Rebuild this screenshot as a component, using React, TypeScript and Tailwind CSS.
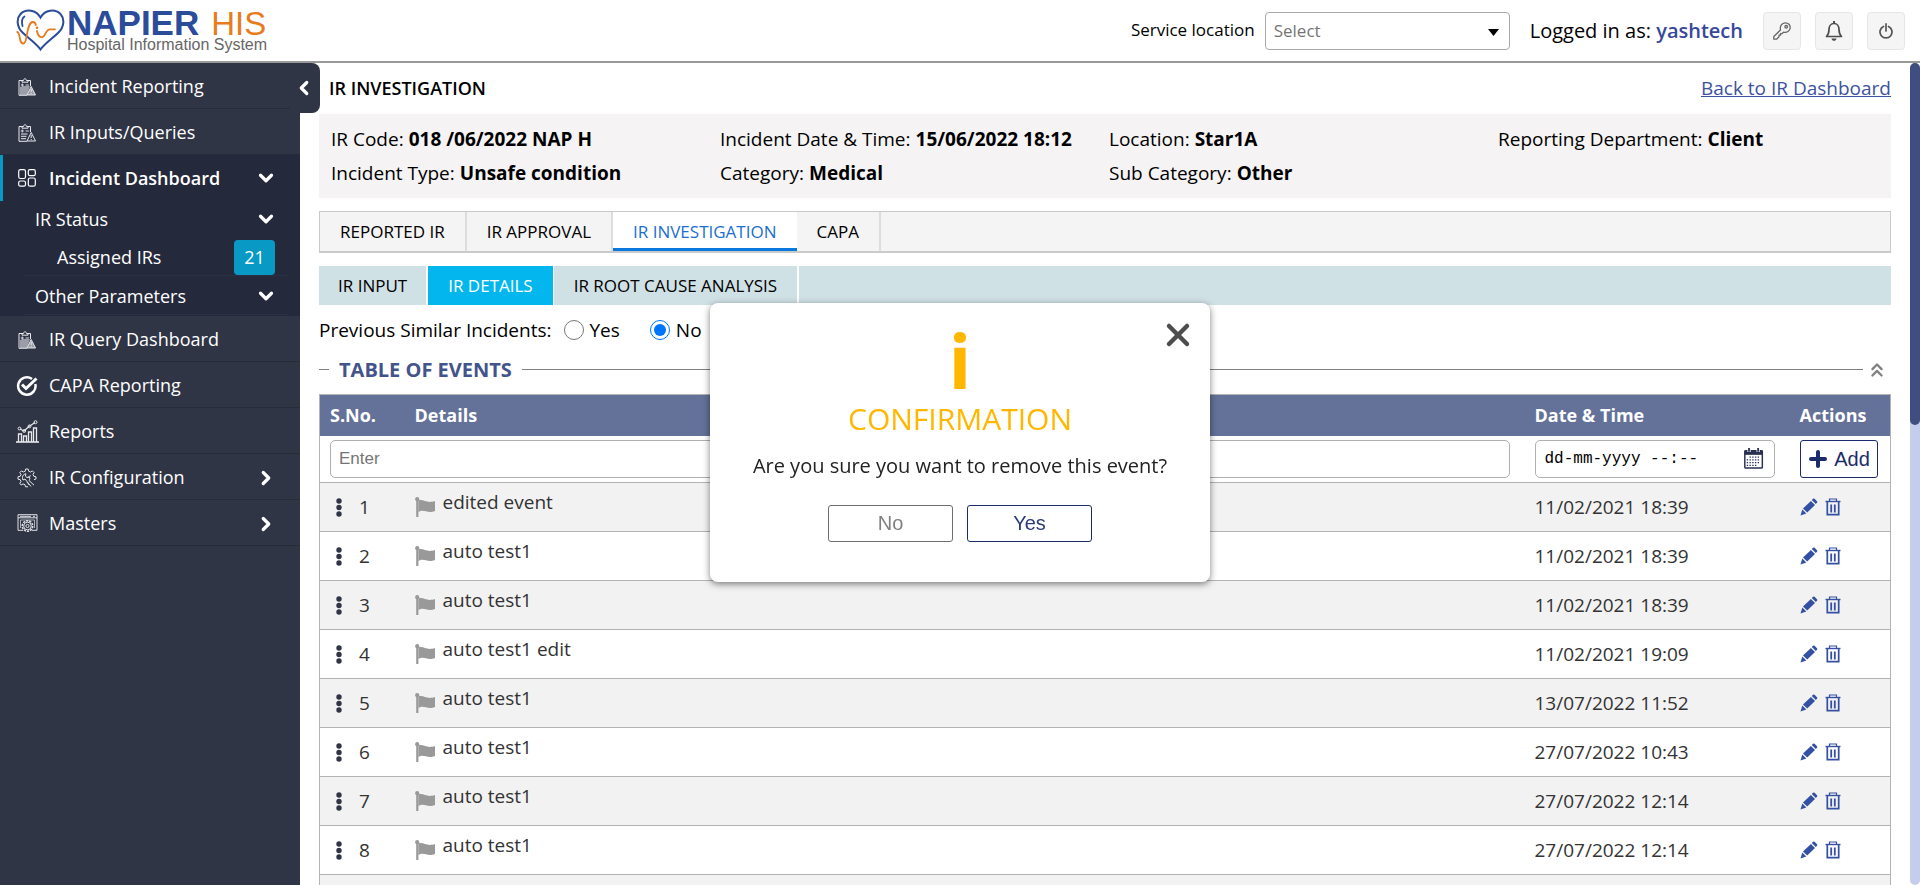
import React from "react";
import { ChevronDown, ChevronRight, ChevronLeft, ChevronsUp, X, Plus } from "lucide-react";

function HeartLogo() {
  return (
    <svg width="50" height="44" viewBox="0 0 50 44" fill="none" aria-hidden="true">
      <path d="M24.500 40.500C20 34 12 29 6.500 23.500C1 18 0 10 4.500 5C10 -0.500 20 0.500 24.500 8.500C29 0.500 39 -0.500 44.500 5C49 10 48 18 42.500 23.500C37 29 29 34 24.500 40.500Z" stroke="#2b4c9b" strokeWidth="2" />
      <path d="M6.500 17C5.500 12.500 6 9 8.500 7.500" stroke="#2b4c9b" strokeWidth="1.800" strokeLinecap="round" />
      <path d="M1.200 23C3 23 3.200 26 4 30C5 35 8 36 9.500 32C11.500 26 11.500 14 16.500 13C19 12.700 19.500 14.500 19.800 16M21 22C22 28 25.500 29.500 28 27C30.500 24 30.500 20 34 20.300H39" stroke="#e87b1c" strokeWidth="1.800" strokeLinecap="round" />
      <circle cx="21" cy="18.800" r="1.300" fill="#e87b1c" />
    </svg>
  );
}

function ClipboardIcon({ filled }: { filled?: boolean }) {
  return (
    <svg width="18" height="18" viewBox="0 0 18 18" fill="none" stroke="#e8e9ec" aria-hidden="true">
      {filled && <path d="M5 8H12L9 17H2V9Z" fill="#9b9ea8" stroke="none" />}
      <path d="M4.500 2.500H1V17.300H9M9.500 2.500H12.500V8" />
      <path d="M4 4.200V2.500H5.500C5.500 0.200 8.500 0.200 8.500 2.500H10V4.200Z" />
      <path d="M2.800 7H5.800M4.300 5.500V8.500M7.500 7H11" strokeWidth="0.900" />
      {!filled && <path d="M3 10H9.500M3 12.300H8.500M3 14.700H8" />}
      <path d="M13.200 8.500L17.500 17H9Z" fill={filled ? "#9b9ea8" : "#303546"} />
      <path d="M13.200 11V14M13.200 15V16" />
    </svg>
  );
}

function DashboardIcon() {
  return (
    <svg width="18" height="18" viewBox="0 0 18 18" fill="none" stroke="#fff" strokeWidth="1.200" aria-hidden="true">
      <rect x="0.700" y="0.700" width="6.800" height="8.800" rx="1.800" />
      <rect x="10.300" y="0.700" width="7" height="6" rx="1.600" />
      <rect x="0.700" y="12" width="6.800" height="5.200" rx="1.600" />
      <rect x="10.300" y="9" width="7" height="8.200" rx="1.800" />
    </svg>
  );
}

function CheckCircleIcon() {
  return (
    <svg width="22" height="20" viewBox="0 0 22 20" fill="none" stroke="#fff" aria-hidden="true">
      <path d="M16 3A8.700 8.700 0 1 0 19.300 8" strokeWidth="2.500" />
      <path d="M6 8.500L10 12.500L20.500 2.500" strokeWidth="3" />
    </svg>
  );
}

function ReportsIcon() {
  return (
    <svg width="23" height="23" viewBox="0 0 23 23" fill="none" stroke="#e8e9ec" aria-hidden="true">
      <path d="M0 22H23" strokeWidth="1.600" />
      <path d="M2.500 22V14H5.500V22M7.500 22V16H10.500V22M12.500 22V12H15.500V22M17.500 22V8H20.500V22" strokeWidth="1.300" />
      <path d="M4 9L8 11L13 6.500L19 2.500" strokeWidth="1.200" />
      <circle cx="3.500" cy="8.500" r="1.400" />
      <circle cx="8.200" cy="11" r="1.400" />
      <circle cx="13.500" cy="6.300" r="1.400" />
      <circle cx="19.500" cy="2.200" r="1.500" />
    </svg>
  );
}

function ToolGearIcon() {
  return (
    <svg width="20" height="20" viewBox="0 0 20 20" fill="none" stroke="#e8e9ec" strokeLinejoin="round" aria-hidden="true">
      <path d="M11 18.800H8.500L8 16.700L6 15.900L4.200 17L2.800 15.400L4 13.600L3.200 11.600L1 11.200V8.800L3.200 8.300L4 6.400L2.800 4.600L4.500 2.900L6.300 4L8.200 3.200L8.700 1H11.200L11.700 3.200L13.600 4L15.400 2.900L17.100 4.600L16 6.400L16.800 8.300L19 8.800V11L17 11.600" />
      <path d="M6 12C4.600 9 6 6 9 5.800L8.300 8L10 9.500L12.500 9C13 11 12.500 12 12 12.500L17 17.200M6 12L8 11L14 18.500" />
      <path d="M10 14L12 17M14 7.500L11 9" strokeWidth="0.800" />
    </svg>
  );
}

function MastersIcon() {
  return (
    <svg width="21" height="19" viewBox="0 0 21 19" fill="none" stroke="#e0e2e6" aria-hidden="true">
      <path d="M6 16.300H1V0.700H20V16.300H15M1 3.800H20M3 2.300H14M16 2.300H18" />
      <path d="M3.500 14V6H17.500V14" strokeWidth="0.700" />
      <circle cx="10.500" cy="12" r="5.200" strokeDasharray="2.200 1" strokeWidth="1.600" />
      <circle cx="10.500" cy="12" r="3.800" />
      <circle cx="10.500" cy="12" r="1.600" />
    </svg>
  );
}

function KeyIcon() {
  return (
    <svg width="18" height="18" viewBox="0 0 18 18" fill="none" stroke="#666" strokeWidth="1.300" strokeLinejoin="round" aria-hidden="true">
      <path d="M7.500 8C6.700 4.500 8.500 0.800 12.300 0.800C15.500 0.800 17.300 3.200 17.200 5.700C17 9 13.800 11 10.500 10.200L8.800 11.700H7.500V13.200H6V14.700L3.500 17.200H0.800V14.500Z" />
      <circle cx="13.200" cy="4.800" r="1.300" />
    </svg>
  );
}

function BellIcon() {
  return (
    <svg width="18" height="20" viewBox="0 0 18 20" fill="none" stroke="#4d4d4d" strokeWidth="1.700" strokeLinejoin="round" aria-hidden="true">
      <path d="M1.500 15.500C3.500 13.500 4 12 4 8.500C4 5 6 2.500 9 2.500C12 2.500 14 5 14 8.500C14 12 14.500 13.500 16.500 15.500Z" />
      <path d="M9 0V2.500" strokeWidth="2" />
      <path d="M6.500 17.500H11.500C11.300 19 10 19.800 9 19.800C8 19.800 6.700 19 6.500 17.500Z" fill="#4d4d4d" stroke="none" />
    </svg>
  );
}

function PowerIcon() {
  return (
    <svg width="14" height="16" viewBox="0 0 14 16" fill="none" stroke="#555" strokeWidth="1.700" strokeLinecap="round" aria-hidden="true">
      <path d="M7 0.900V8M4.500 3.500A6 6 0 1 0 9.500 3.500" />
    </svg>
  );
}

function FlagIcon() {
  return (
    <svg width="20" height="20" viewBox="0 0 20 20" fill="#999" aria-hidden="true">
      <circle cx="2.200" cy="2.200" r="2.100" />
      <path d="M1.200 2H3.400V20H1.200Z" />
      <path d="M3.400 3.500C9 1.500 11 7 20 4V14C12 17 9 11.500 3.400 15Z" />
    </svg>
  );
}

function PencilIcon() {
  return (
    <svg width="18" height="18" viewBox="0 0 18 18" fill="#3450a4" aria-hidden="true">
      <path d="M13 0.800Q13.800 0 14.600 0.800L17 3.200Q17.800 4 17 4.800L15.800 6L11.800 2Z" />
      <path d="M10.900 2.900L15 7L7.200 14.600L3 10.400Z" />
      <path d="M2.300 11.500L6.300 15.500L0.500 17.500Z" />
    </svg>
  );
}

function TrashIcon() {
  return (
    <svg width="16" height="18" viewBox="0 0 16 18" fill="none" stroke="#3450a4" aria-hidden="true">
      <path d="M0.500 3.500H15.500" strokeWidth="1.400" />
      <path d="M4.500 3V1H11.500V3" strokeWidth="1.200" />
      <path d="M2.300 4V16.700H13.700V4" strokeWidth="1.700" />
      <path d="M6.200 6.500V14.500M9.800 6.500V14.500" strokeWidth="1.800" />
    </svg>
  );
}

function CalendarIcon() {
  return (
    <svg width="21" height="23" viewBox="0 0 21 23" fill="none" aria-hidden="true">
      <rect x="0.900" y="3" width="19.200" height="19" rx="1" stroke="#2a3050" strokeWidth="1.600" />
      <rect x="0.500" y="2.500" width="20" height="5" fill="#2a3050" />
      <path d="M5.500 0V4.500M15.500 0V4.500" stroke="#fff" strokeWidth="3.500" />
      <path d="M5.500 0V4M15.500 0V4" stroke="#2a3050" strokeWidth="2" />
      <path d="M6 10H18M3 13H18M3 16H18M3 19H15" stroke="#2a3050" strokeWidth="1.500" strokeDasharray="1.500 1.500" />
    </svg>
  );
}

function DragDots() {
  return (
    <svg width="6" height="19" viewBox="0 0 6 19" fill="#303546" aria-hidden="true">
      <circle cx="3" cy="3" r="2.700" />
      <circle cx="3" cy="9.500" r="2.700" />
      <circle cx="3" cy="16" r="2.700" />
    </svg>
  );
}

function NavItem({ icon, label, chevron, active }: { icon: React.ReactNode; label: string; chevron?: "right" | "down"; active?: boolean }) {
  return (
    <a
      href="#"
      className={
        active
          ? "flex h-[46px] items-center border-l-[3px] border-[#0899c5] bg-[#25293c] pr-[23px] pl-3 font-semibold"
          : "flex h-[46px] items-center border-b border-[#272c3b] pt-[2px] pr-[23px] pl-[15px]"
      }
    >
      <span className="mr-[10px] flex w-6 shrink-0 justify-center">{icon}</span>
      <span className="flex-1">{label}</span>
      {chevron === "right" && <ChevronRight size={22} strokeWidth={3.5} />}
      {chevron === "down" && <ChevronDown size={22} strokeWidth={3.5} />}
    </a>
  );
}

function Sidebar() {
  return (
    <aside className="relative w-[300px] shrink-0 bg-[#303546] text-[18px] text-white">
      <button aria-label="Collapse menu" className="absolute top-0 left-[290px] z-10 flex h-[50px] w-[30px] items-center rounded-r-lg bg-[#303546] pl-[3px]">
        <ChevronLeft size={22} strokeWidth={3.5} />
      </button>
      <nav>
        <NavItem icon={<ClipboardIcon filled />} label="Incident Reporting" />
        <NavItem icon={<ClipboardIcon />} label="IR Inputs/Queries" />
        <NavItem icon={<DashboardIcon />} label="Incident Dashboard" chevron="down" active />
        <div className="bg-[#25293c] pb-px">
          <a href="#" className="flex h-9 items-center pr-[23px] pl-[35px]">
            <span className="flex-1">IR Status</span>
            <ChevronDown size={22} strokeWidth={3.5} />
          </a>
          <a href="#" className="mr-3 ml-6 flex h-[39px] items-center border-b border-[#2b3043] pt-[2px] pr-[13px] pl-[33px]">
            <span className="flex-1">Assigned IRs</span>
            <span className="flex h-[35px] w-[41px] items-center justify-center rounded bg-[#0899c5]">21</span>
          </a>
          <a href="#" className="mr-3 ml-6 flex h-[39px] items-center border-b border-[#2b3043] pt-[2px] pr-[11px] pl-[11px]">
            <span className="flex-1">Other Parameters</span>
            <ChevronDown size={22} strokeWidth={3.5} />
          </a>
        </div>
        <NavItem icon={<ClipboardIcon filled />} label="IR Query Dashboard" />
        <NavItem icon={<CheckCircleIcon />} label="CAPA Reporting" />
        <NavItem icon={<ReportsIcon />} label="Reports" />
        <NavItem icon={<ToolGearIcon />} label="IR Configuration" chevron="right" />
        <NavItem icon={<MastersIcon />} label="Masters" chevron="right" />
      </nav>
    </aside>
  );
}

function HeaderButton({ label, children }: { label: string; children: React.ReactNode }) {
  return (
    <button aria-label={label} className="flex h-[38px] w-[38px] items-center justify-center rounded border border-[#e6e6e6] bg-[#f5f5f5]">
      {children}
    </button>
  );
}

function Header() {
  return (
    <header className="flex h-[63px] shrink-0 items-center justify-between border-b-2 border-[#999] bg-white pr-[15px] pl-4">
      <a href="#" className="flex items-center gap-px font-['Liberation_Sans',sans-serif]">
        <HeartLogo />
        <span className="flex flex-col">
          <span className="flex items-baseline gap-3 leading-[28px]">
            <span className="text-[35px] font-bold text-[#2b4c9b]">NAPIER</span>
            <span className="text-[33px] text-[#e87b1c]">HIS</span>
          </span>
          <span className="text-[16px] leading-[14px] text-[#666]">Hospital Information System</span>
        </span>
      </a>
      <div className="flex items-center">
        <label htmlFor="location" className="mr-[10px] pb-[2px] text-[17px] font-medium">Service location</label>
        <div className="relative mr-5">
          <select id="location" className="block h-[38px] w-[245px] appearance-none rounded border border-[#aaa] bg-white px-2 text-[17px] text-[#757575]">
            <option>Select</option>
          </select>
          <svg className="pointer-events-none absolute top-[17px] right-[11px]" width="11" height="7" viewBox="0 0 11 7" aria-hidden="true">
            <path d="M0 0H11L5.500 7Z" fill="#000" />
          </svg>
        </div>
        <p className="mr-5 text-[20px]">
          Logged in as: <span className="font-semibold text-[#36489b]">yashtech</span>
        </p>
        <div className="flex gap-[14px]">
          <HeaderButton label="Change password"><KeyIcon /></HeaderButton>
          <HeaderButton label="Notifications"><BellIcon /></HeaderButton>
          <HeaderButton label="Log out"><PowerIcon /></HeaderButton>
        </div>
      </div>
    </header>
  );
}

const facts = [
  ["IR Code:", "018 /06/2022 NAP H"],
  ["Incident Date & Time:", "15/06/2022 18:12"],
  ["Location:", "Star1A"],
  ["Reporting Department:", "Client"],
  ["Incident Type:", "Unsafe condition"],
  ["Category:", "Medical"],
  ["Sub Category:", "Other"],
];

const events = [
  ["edited event", "11/02/2021 18:39"],
  ["auto test1", "11/02/2021 18:39"],
  ["auto test1", "11/02/2021 18:39"],
  ["auto test1 edit", "11/02/2021 19:09"],
  ["auto test1", "13/07/2022 11:52"],
  ["auto test1", "27/07/2022 10:43"],
  ["auto test1", "27/07/2022 12:14"],
  ["auto test1", "27/07/2022 12:14"],
  ["auto test1", "27/07/2022 12:14"],
];

function EventsTable() {
  return (
    <table className="w-full table-fixed border-collapse border border-[#b3b3b3] text-left text-[19px] text-[#333]">
      <colgroup>
        <col className="w-[85px]" />
        <col />
        <col className="w-[265px]" />
        <col className="w-[101px]" />
      </colgroup>
      <thead>
        <tr className="h-[41px] bg-[#647199] text-[18px] text-white">
          <th className="pl-[10px] font-bold">S.No.</th>
          <th className="pl-[10px] font-bold">Details</th>
          <th className="pl-[10px] font-bold">Date &amp; Time</th>
          <th className="pl-[10px] font-bold">Actions</th>
        </tr>
      </thead>
      <tbody>
        <tr className="h-[47px] bg-white">
          <td colSpan={2} className="pr-[15px] pl-[10px]">
            <input aria-label="Event details" placeholder="Enter" className="block h-[38px] w-full rounded-[5px] border border-[#b0b0b0] px-2 font-['Liberation_Sans',sans-serif] text-[17px] placeholder:text-[#757575]" />
          </td>
          <td className="pr-[15px] pl-[10px]">
            <div className="flex h-[38px] items-center rounded-[5px] border border-[#b0b0b0] pr-[10px] pl-[9px]">
              <input aria-label="Event date and time" defaultValue="dd-mm-yyyy --:--" className="w-full min-w-0 font-['Liberation_Mono',monospace] text-[16px] text-black" />
              <CalendarIcon />
            </div>
          </td>
          <td className="pl-[10px]">
            <button className="flex h-[38px] w-[78px] items-center justify-center gap-1 rounded-[3px] border border-[#1c2c6b] bg-white pr-px font-['Liberation_Sans',sans-serif] text-[20px] text-[#1c2c6b]">
              <Plus size={24} strokeWidth={4} />
              Add
            </button>
          </td>
        </tr>
        {events.map(([details, date], i) => (
          <tr key={i} className="h-[49px] border-t border-[#b3b3b3] odd:bg-white even:bg-[#f2f2f2]">
            <td className="pl-4">
              <span className="flex items-center gap-[17px]">
                <DragDots />
                {i + 1}
              </span>
            </td>
            <td className="pl-[10px]">
              <span className="flex items-center gap-2">
                <FlagIcon />
                <span className="pb-[10px]">{details}</span>
              </span>
            </td>
            <td className="pl-[10px]">{date}</td>
            <td className="pl-[10px]">
              <span className="flex items-center gap-[7px]">
                <button aria-label="Edit event"><PencilIcon /></button>
                <button aria-label="Remove event"><TrashIcon /></button>
              </span>
            </td>
          </tr>
        ))}
      </tbody>
    </table>
  );
}

function Content() {
  return (
    <main className="min-w-0 flex-1 overflow-hidden px-[19px]">
      <div className="flex h-[51px] items-center justify-between pl-[10px]">
        <h1 className="text-[18px] font-semibold">IR INVESTIGATION</h1>
        <a href="#" className="text-[19px] text-[#3d52a1] underline">Back to IR Dashboard</a>
      </div>
      <dl className="grid grid-cols-4 bg-[#f5f3f4] p-2 text-[19px]">
        {facts.map(([label, value]) => (
          <div key={label} className="flex h-[34px] items-center gap-[5px] pl-1">
            <dt>{label}</dt>
            <dd className="font-bold">{value}</dd>
          </div>
        ))}
      </dl>
      <nav className="mt-[13px] flex h-[42px] border border-b-2 border-[#c8cacc] bg-[#f4f4f4] text-[17px]">
        <a href="#" className="flex items-center border-r-2 border-[#ddd] px-5">REPORTED IR</a>
        <a href="#" className="flex items-center border-r-2 border-[#ddd] px-5">IR APPROVAL</a>
        <a href="#" className="flex items-center bg-white px-5 text-[#1a6fd0] shadow-[inset_0_-3px_0_#0a78dc]">IR INVESTIGATION</a>
        <a href="#" className="flex items-center border-r-2 border-[#ddd] px-5">CAPA</a>
      </nav>
      <nav className="mt-[13px] flex h-[39px] bg-[#d0e1e5] text-[17px]">
        <a href="#" className="flex items-center border-r-2 border-white px-[19px]">IR INPUT</a>
        <a href="#" className="flex items-center border-r border-white bg-[#04b6ee] px-5 text-white">IR DETAILS</a>
        <a href="#" className="flex items-center border-r-2 border-white px-5">IR ROOT CAUSE ANALYSIS</a>
      </nav>
      <div className="flex h-[50px] items-center text-[19px]">
        <span className="mr-3">Previous Similar Incidents:</span>
        <label className="mr-[30px] flex items-center gap-[6px]">
          <input type="radio" name="similar" className="h-5 w-5" />
          Yes
        </label>
        <label className="flex items-center gap-[6px]">
          <input type="radio" name="similar" defaultChecked className="h-5 w-5" />
          No
        </label>
      </div>
      <div className="flex h-[29px] items-center">
        <span className="mr-[10px] h-px w-[10px] bg-[#808080]" />
        <h2 className="mr-[10px] text-[20px] font-bold text-[#43538c]">TABLE OF EVENTS</h2>
        <span className="h-px flex-1 bg-[#808080]" />
        <button aria-label="Collapse section" className="mr-[3px] ml-[3px] text-[#808080]">
          <ChevronsUp size={22} strokeWidth={2.5} />
        </button>
      </div>
      <div className="mt-[10px]">
        <EventsTable />
      </div>
    </main>
  );
}

function ConfirmDialog() {
  return (
    <div className="fixed inset-0 z-20 flex items-center justify-center">
      <div role="dialog" aria-labelledby="confirm-title" className="relative flex h-[279px] w-[500px] flex-col items-center rounded-lg bg-white shadow-[0_2px_7px_rgba(0,0,0,0.5)]">
        <button aria-label="Close" className="absolute top-[14px] right-[14px] text-[#4d4d4d]">
          <X size={36} strokeWidth={3} />
        </button>
        <span className="mt-[21px] text-[75px] leading-[72px] font-bold text-[#ffb700]" aria-hidden="true">i</span>
        <h2 id="confirm-title" className="mt-[3px] text-[30px] leading-[40px] text-[#ffb700]">CONFIRMATION</h2>
        <p className="mt-[13px] text-[20px] leading-[28px] text-[#222]">Are you sure you want to remove this event?</p>
        <div className="mt-[25px] flex gap-[14px] font-['Liberation_Sans',sans-serif] text-[20px]">
          <button className="h-[37px] w-[125px] rounded-[3px] border border-[#6e6e6e] pb-px text-[#808080]">No</button>
          <button className="h-[37px] w-[125px] rounded-[3px] border border-[#1c2c6b] pb-px text-[#2b3a7a]">Yes</button>
        </div>
      </div>
    </div>
  );
}

export default function App() {
  return (
    <div className="flex h-screen flex-col overflow-hidden bg-white font-['Open_Sans',sans-serif] text-black">
      <Header />
      <div className="flex min-h-0 flex-1">
        <Sidebar />
        <Content />
        <div className="w-[10px] shrink-0 rounded-full bg-[#c5cdec]">
          <div className="h-[44%] rounded-full bg-[#3f4d80]" />
        </div>
      </div>
      <ConfirmDialog />
    </div>
  );
}
